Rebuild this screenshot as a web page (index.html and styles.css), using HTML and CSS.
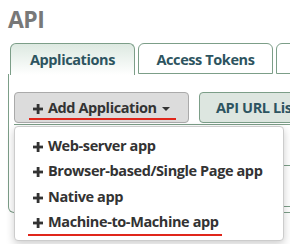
FILE: index.html
```html
<!DOCTYPE html>
<html lang="en">
<head>
  <meta charset="UTF-8" />
  <title>API</title>
  <link rel="stylesheet" href="styles.css">
</head>
<body>
<div class="page">
  <h1 class="title">API</h1>

  <!-- Tabs -->
  <ul class="tabs">
    <li class="tab active">Applications</li>
    <li class="tab">Access Tokens</li>
    <li class="tab">Scopes</li>
  </ul>

  <!-- Tab panel -->
  <section class="panel">
    <div class="toolbar">
      <button class="btn btn-gray">
        <span class="label marked"><svg class="plus" viewBox="0 0 10 10"><rect x="3.7" y="0" width="2.8" height="10"/><rect x="0" y="3.6" width="10" height="2.8"/></svg>Add Application <span class="caret"></span></span>
      </button>
      <button class="btn btn-green">API URL List</button>
    </div>
    <div class="rows">
      <div class="row"></div>
      <div class="row"></div>
      <div class="row"></div>
    </div>
  </section>

  <!-- Dropdown menu (open) -->
  <ul class="menu">
    <li><svg class="plus" viewBox="0 0 10 10"><rect x="3.7" y="0" width="2.8" height="10"/><rect x="0" y="3.6" width="10" height="2.8"/></svg>Web-server app</li>
    <li><svg class="plus" viewBox="0 0 10 10"><rect x="3.7" y="0" width="2.8" height="10"/><rect x="0" y="3.6" width="10" height="2.8"/></svg>Browser-based/Single Page app</li>
    <li><svg class="plus" viewBox="0 0 10 10"><rect x="3.7" y="0" width="2.8" height="10"/><rect x="0" y="3.6" width="10" height="2.8"/></svg>Native app</li>
    <li><span class="marked"><svg class="plus" viewBox="0 0 10 10"><rect x="3.7" y="0" width="2.8" height="10"/><rect x="0" y="3.6" width="10" height="2.8"/></svg>Machine-to-Machine app</span></li>
  </ul>
</div>
</body>
</html>
```

FILE: styles.css
```css
* {
  box-sizing: border-box;
}
body {
  margin: 0;
  font-family: "Open Sans", sans-serif;
  background: #fff;
}

.page {
  position: relative;
  width: 290px;
  height: 244px;
  overflow: hidden;
  padding-left: 8px;
}

.title {
  margin: 0;
  padding: 3px 0 0 0;
  height: 43px;
  font-size: 23px;
  font-weight: bold;
  color: #787878;
  letter-spacing: -0.5px;
}

/* Tabs */
.tabs {
  list-style: none;
  display: flex;
  gap: 3px;
  margin: 0;
  padding: 0 0 0 2px;
  height: 32px;
  width: 450px;
}

.tab {
  flex-shrink: 0;
  width: 125px;
  height: 31px;
  border: 1px solid #7c9e88;
  border-radius: 6px 6px 0 0;
  text-align: center;
  font-size: 14.5px;
  font-weight: bold;
  color: #2d5460;
  line-height: 31px;
  background: #fff;
  letter-spacing: -0.4px;
}

.tab:nth-child(2) {
  width: 135px;
}

.tab:nth-child(3) {
  width: 160px;
}

.tab.active {
  height: 32px;
  border-bottom: none;
  background: linear-gradient(#dde9e1, #fff);
}

/* Panel */
.panel {
  border: 1px solid #7c9e88;
  border-top: none;
  border-radius: 0 0 6px 6px;
  height: 139px;
  width: 400px;
  margin-top: -1px;
  padding: 18px 0 0 5px;
}

.toolbar {
  display: flex;
  gap: 10px;
}

.btn {
  height: 31px;
  border-radius: 4px;
  font-family: inherit;
  font-size: 14.5px;
  font-weight: bold;
  padding: 0;
  letter-spacing: -0.4px;
}

.btn-gray {
  width: 175px;
  background: #dcdcdc;
  border: 1px solid #aaa;
  color: #333;
}

.btn-green {
  width: 120px;
  background: #dde6e0;
  border: 1px solid #7c9e88;
  color: #2d5460;
  text-align: left;
  padding-left: 16px;
}

.plus {
  width: 10px;
  height: 10px;
  margin-right: 5px;
  fill: #333;
  vertical-align: -1px;
}

.caret {
  display: inline-block;
  vertical-align: middle;
  border-top: 4px solid #333;
  border-left: 4px solid transparent;
  border-right: 4px solid transparent;
  margin-left: 2px;
}

/* red annotation underline */
.marked {
  position: relative;
  display: inline-block;
}

.marked::after {
  content: "";
  position: absolute;
  left: -4px;
  right: -6px;
  bottom: -3px;
  height: 2px;
  background: #e0261b;
}

.rows {
  margin-top: 1px;
}

.row {
  height: 41px;
  border-top: 1px solid #7c9e88;
}

/* Dropdown menu */
.menu {
  position: absolute;
  top: 126px;
  left: 14px;
  z-index: 10;
  width: 270px;
  list-style: none;
  margin: 0;
  padding: 6px 0 0;
  height: 115px;
  background: #fff;
  border: 1px solid #ccc;
  border-radius: 4px;
  box-shadow: 0 3px 8px rgba(0, 0, 0, 0.2);
}

.menu li {
  height: 25.3px;
  line-height: 25px;
  padding-left: 18px;
  font-size: 14.5px;
  font-weight: bold;
  color: #333;
  letter-spacing: -0.4px;
}

.menu .marked::after {
  left: -5px;
  right: -3px;
  bottom: -2px;
}
```
